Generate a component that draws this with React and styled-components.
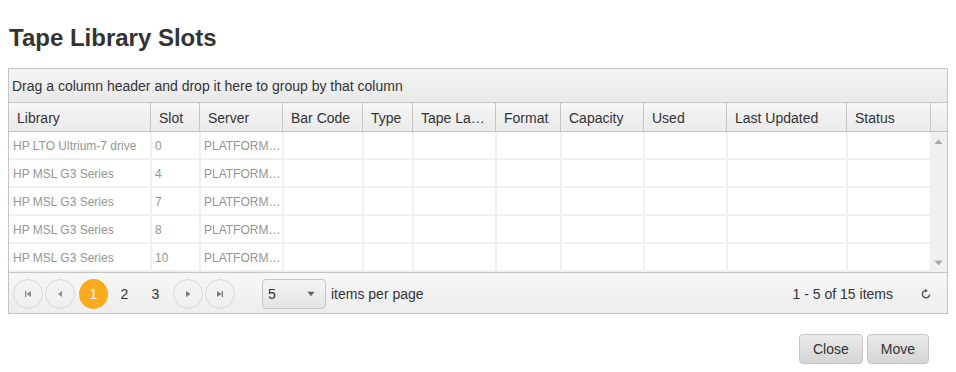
import React from 'react';
import styled, { createGlobalStyle } from 'styled-components';

const GlobalStyle = createGlobalStyle`
  html, body { margin: 0; padding: 0; background: #fff; }
  body { font-family: "Liberation Sans", Arial, sans-serif; color: #333; }
  * { box-sizing: border-box; }
`;

const COLS = '141px 49px 83px 80px 50px 83px 65px 83px 83px 120px 84px';

const columns = ['Library', 'Slot', 'Server', 'Bar Code', 'Type', 'Tape Label', 'Format', 'Capacity', 'Used', 'Last Updated', 'Status'];

const rows = [
  ['HP LTO Ultrium-7 drive', '0', 'PLATFORMSERVER01'],
  ['HP MSL G3 Series', '4', 'PLATFORMSERVER01'],
  ['HP MSL G3 Series', '7', 'PLATFORMSERVER01'],
  ['HP MSL G3 Series', '8', 'PLATFORMSERVER01'],
  ['HP MSL G3 Series', '10', 'PLATFORMSERVER01'],
];

const Page = styled.div`
  width: 956px;
  padding: 0 8px;
`;

const Title = styled.h2`
  margin: 24px 0 16px 1px;
  font-size: 24px;
  line-height: 28px;
  font-weight: bold;
  color: #333;
`;

const Grid = styled.div`
  width: 940px;
  border: 1px solid #c5c5c5;
  background: #fff;
`;

const GroupPanel = styled.div`
  height: 34px;
  border-bottom: 1px solid #c5c5c5;
  background: linear-gradient(#f4f4f4, #e9e9e9);
  display: flex;
  align-items: center;
  padding: 1px 0 0 3px;
  font-size: 14px;
  color: #333;
`;

const HeaderRow = styled.div`
  display: grid;
  grid-template-columns: ${COLS} 17px;
  height: 29px;
  border-bottom: 1px solid #c5c5c5;
  background: linear-gradient(#f6f6f6, #eaeaea);
`;

const HeaderCell = styled.div`
  border-left: ${(p) => (p.$first ? 'none' : '1px solid #c5c5c5')};
  padding: 2px 9px 0 8px;
  font-size: 14px;
  line-height: 26px;
  color: #333;
  overflow: hidden;
  white-space: nowrap;
  text-overflow: ellipsis;
`;

const Body = styled.div`
  display: flex;
  height: 140px;
`;

const Rows = styled.div`
  width: 921px;
`;

const Row = styled.div`
  display: grid;
  grid-template-columns: ${COLS};
  height: 28px;
  border-bottom: 2px solid #f0f0f0;
`;

const Cell = styled.div`
  border-left: ${(p) => (p.$first ? 'none' : '2px solid #f0f0f0')};
  padding: 2px 0 0 ${(p) => (p.$first ? '4px' : '3px')};
  font-size: 12px;
  line-height: 24px;
  color: #959595;
  overflow: hidden;
  white-space: nowrap;
  text-overflow: ellipsis;
`;

const Scrollbar = styled.div`
  width: 17px;
  background: #f0f0f0;
  display: flex;
  flex-direction: column;
  justify-content: space-between;
  align-items: center;
  padding: 7px 0 6px;
`;

const Pager = styled.div`
  height: 41px;
  border-top: 1px solid #c5c5c5;
  background: linear-gradient(#f7f7f7, #ededed);
  display: flex;
  align-items: center;
  padding: 1px 0 0 4px;
`;

const NavButton = styled.div`
  width: 30px;
  height: 30px;
  border: 1px solid #d8d8d8;
  border-radius: 50%;
  display: flex;
  align-items: center;
  justify-content: center;
  margin-right: ${(p) => p.$mr || 0}px;
  margin-left: ${(p) => p.$ml || 0}px;
`;

const PageNum = styled.div`
  width: 29px;
  height: 30px;
  border-radius: 50%;
  display: flex;
  align-items: center;
  justify-content: center;
  font-size: 14px;
  margin-right: 2px;
  color: ${(p) => (p.$active ? '#fff' : '#333')};
  background: ${(p) => (p.$active ? '#f9ab1f' : 'transparent')};
`;

const Select = styled.div`
  margin-left: 27px;
  width: 64px;
  height: 30px;
  border: 1px solid #c5c5c5;
  border-radius: 4px;
  background: linear-gradient(#f4f4f4, #e4e4e4);
  display: flex;
  align-items: center;
  justify-content: space-between;
  padding: 0 10px 0 5px;
  font-size: 14px;
  color: #333;
`;

const PagerText = styled.span`
  font-size: 14px;
  color: #333;
  margin-left: ${(p) => p.$ml || 0}px;
  margin-right: ${(p) => p.$mr || 0}px;
`;

const Spacer = styled.div`
  flex: 1;
`;

const Refresh = styled.div`
  width: 24px;
  height: 24px;
  display: flex;
  align-items: center;
  justify-content: center;
  margin-right: 9px;
`;

const Footer = styled.div`
  display: flex;
  justify-content: flex-end;
  gap: 4px;
  margin-top: 20px;
  padding-right: 19px;
`;

const Button = styled.button`
  height: 30px;
  padding: 0 13px;
  border: 1px solid #c5c5c5;
  border-radius: 4px;
  background: linear-gradient(#ebebeb, #d4d4d4);
  font-family: "Liberation Sans", Arial, sans-serif;
  font-size: 14px;
  color: #333;
`;

const ICON = '#8c8c8c';

const FirstIcon = () => (
  <svg width="10" height="10" viewBox="0 0 10 10">
    <rect x="2" y="2" width="1.3" height="6" fill={ICON} />
    <polygon points="8,2 3.5,5 8,8" fill={ICON} />
  </svg>
);
const PrevIcon = () => (
  <svg width="10" height="10" viewBox="0 0 10 10">
    <polygon points="7,2 3,5 7,8" fill={ICON} />
  </svg>
);
const NextIcon = () => (
  <svg width="10" height="10" viewBox="0 0 10 10">
    <polygon points="3,2 7.5,5 3,8" fill="#777" />
  </svg>
);
const LastIcon = () => (
  <svg width="10" height="10" viewBox="0 0 10 10">
    <polygon points="2,2 6.5,5 2,8" fill="#777" />
    <rect x="6.7" y="2" width="1.3" height="6" fill="#777" />
  </svg>
);
const DownArrow = ({ color = '#666', w = 9 }) => (
  <svg width={w} height="6" viewBox="0 0 9 6">
    <polygon points="0.5,0.5 8.5,0.5 4.5,5.5" fill={color} />
  </svg>
);
const UpArrow = () => (
  <svg width="9" height="6" viewBox="0 0 9 6">
    <polygon points="0.5,5 8.5,5 4.5,0.5" fill="#a8a8a8" />
  </svg>
);
const RefreshIcon = () => (
  <svg width="12" height="12" viewBox="0 0 12 12">
    <path d="M5.6 2.6 A3.6 3.6 0 1 0 9.6 6.6" fill="none" stroke="#555" strokeWidth="1.4" />
    <polygon points="5,0.8 8,2.7 5,4.6" fill="#555" />
  </svg>
);

export default function App() {
  return (
    <Page>
      <GlobalStyle />
      <Title>Tape Library Slots</Title>
      <Grid>
        <GroupPanel>Drag a column header and drop it here to group by that column</GroupPanel>
        <HeaderRow>
          {columns.map((c, i) => (
            <HeaderCell key={c} $first={i === 0}>{c}</HeaderCell>
          ))}
          <HeaderCell />
        </HeaderRow>
        <Body>
          <Rows>
            {rows.map((r, ri) => (
              <Row key={ri}>
                {columns.map((c, ci) => (
                  <Cell key={c} $first={ci === 0}>{r[ci] || ''}</Cell>
                ))}
              </Row>
            ))}
          </Rows>
          <Scrollbar>
            <UpArrow />
            <DownArrow color="#a8a8a8" />
          </Scrollbar>
        </Body>
        <Pager>
          <NavButton $mr={2}><FirstIcon /></NavButton>
          <NavButton $mr={4}><PrevIcon /></NavButton>
          <PageNum $active>1</PageNum>
          <PageNum>2</PageNum>
          <PageNum>3</PageNum>
          <NavButton $ml={1} $mr={2}><NextIcon /></NavButton>
          <NavButton><LastIcon /></NavButton>
          <Select>
            <span>5</span>
            <DownArrow w={8} color="#666" />
          </Select>
          <PagerText $ml={5}>items per page</PagerText>
          <Spacer />
          <PagerText $mr={21}>1 - 5 of 15 items</PagerText>
          <Refresh><RefreshIcon /></Refresh>
        </Pager>
      </Grid>
      <Footer>
        <Button>Close</Button>
        <Button>Move</Button>
      </Footer>
    </Page>
  );
}
